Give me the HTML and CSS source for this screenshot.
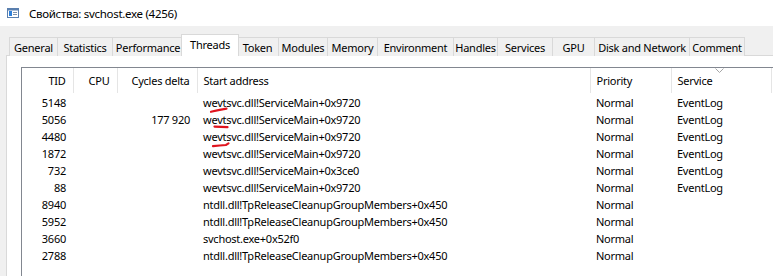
FILE: index.html
```html
<!DOCTYPE html>
<html lang="ru">
<head>
    <meta charset="UTF-8">
    <title>Свойства: svchost.exe (4256)</title>
    <link rel="stylesheet" href="styles.css">
</head>
<body>
    <div class="titlebar">
        <svg class="app-icon" width="12" height="10" viewBox="0 0 12 10">
            <rect x="0.5" y="0.5" width="11" height="9" fill="#fff" stroke="#5a7fae"/>
            <rect x="1" y="1" width="11" height="1.5" fill="#5a7fae"/>
            <rect x="2" y="3" width="3" height="5" fill="#2e7fd8"/>
            <rect x="6" y="4" width="4" height="1" fill="#7a8ea8"/>
            <rect x="6" y="6" width="4" height="1" fill="#7a8ea8"/>
        </svg>
        <span class="title">Свойства: svchost.exe (4256)</span>
    </div>

    <div class="window">
        <div class="tabs">
            <div class="tab t-general">General</div>
            <div class="tab t-stats">Statistics</div>
            <div class="tab t-perf">Performance</div>
            <div class="tab active t-threads">Threads</div>
            <div class="tab t-token">Token</div>
            <div class="tab t-modules">Modules</div>
            <div class="tab t-memory">Memory</div>
            <div class="tab t-env">Environment</div>
            <div class="tab t-handles">Handles</div>
            <div class="tab t-services">Services</div>
            <div class="tab t-gpu">GPU</div>
            <div class="tab t-disk">Disk and Network</div>
            <div class="tab t-comment">Comment</div>
        </div>

        <div class="panel">
            <div class="listview">
                <table class="threads">
                    <colgroup>
                        <col class="c-tid">
                        <col class="c-cpu">
                        <col class="c-cycles">
                        <col class="c-start">
                        <col class="c-prio">
                        <col class="c-service">
                    </colgroup>
                    <thead>
                        <tr>
                            <th class="num">TID</th>
                            <th class="num">CPU</th>
                            <th class="num">Cycles delta</th>
                            <th>Start address</th>
                            <th>Priority</th>
                            <th class="sorted">Service
                                <svg class="sort-arrow" width="9" height="5" viewBox="0 0 9 5">
                                    <path d="M0.5 0.5 L4.5 4.5 L8.5 0.5" fill="none" stroke="#a6a6a6"/>
                                </svg>
                            </th>
                        </tr>
                    </thead>
                    <tbody>
                        <tr><td class="num">5148</td><td></td><td></td><td>wevtsvc.dll!ServiceMain+0x9720</td><td>Normal</td><td>EventLog</td></tr>
                        <tr><td class="num">5056</td><td></td><td class="num">177 920</td><td>wevtsvc.dll!ServiceMain+0x9720</td><td>Normal</td><td>EventLog</td></tr>
                        <tr><td class="num">4480</td><td></td><td></td><td>wevtsvc.dll!ServiceMain+0x9720</td><td>Normal</td><td>EventLog</td></tr>
                        <tr><td class="num">1872</td><td></td><td></td><td>wevtsvc.dll!ServiceMain+0x9720</td><td>Normal</td><td>EventLog</td></tr>
                        <tr><td class="num">732</td><td></td><td></td><td>wevtsvc.dll!ServiceMain+0x3ce0</td><td>Normal</td><td>EventLog</td></tr>
                        <tr><td class="num">88</td><td></td><td></td><td>wevtsvc.dll!ServiceMain+0x9720</td><td>Normal</td><td>EventLog</td></tr>
                        <tr><td class="num">8940</td><td></td><td></td><td>ntdll.dll!TpReleaseCleanupGroupMembers+0x450</td><td>Normal</td><td></td></tr>
                        <tr><td class="num">5952</td><td></td><td></td><td>ntdll.dll!TpReleaseCleanupGroupMembers+0x450</td><td>Normal</td><td></td></tr>
                        <tr><td class="num">3660</td><td></td><td></td><td>svchost.exe+0x52f0</td><td>Normal</td><td></td></tr>
                        <tr><td class="num">2788</td><td></td><td></td><td>ntdll.dll!TpReleaseCleanupGroupMembers+0x450</td><td>Normal</td><td></td></tr>
                    </tbody>
                </table>
            </div>
        </div>
    </div>

    <!-- red pen marks drawn over the screenshot -->
    <svg class="marks" width="773" height="276" viewBox="0 0 773 276">
        <path d="M211 111.8 Q218 110 226.5 108.6" />
        <path d="M214.5 126.6 Q221 126.8 227.5 127.2" />
        <path d="M213 146.2 Q220 145.6 226 145 L228.5 143.4" />
    </svg>
</body>
</html>
```

FILE: styles.css
```css
body {
    margin: 0;
    width: 773px;
    height: 276px;
    overflow: hidden;
    position: relative;
    background-color: #f0f0f0;
    font-family: "Noto Sans", "Open Sans", sans-serif;
    font-size: 11px;
    letter-spacing: -0.25px;
    color: #000;
}

.titlebar {
    height: 26px;
    background-color: #fff;
    display: flex;
    align-items: center;
    padding-left: 7px;
}
.app-icon {
    margin-right: 10px;
    margin-top: -1px;
}
.title {
    font-size: 11.5px;
    letter-spacing: -0.3px;
    color: #000;
}

.window {
    padding: 8px 0 0 6px;
}

.tabs {
    display: flex;
    align-items: flex-end;
    height: 22px;
    padding-left: 3px;
    position: relative;
    z-index: 1;
}
.tab {
    height: 19px;
    box-sizing: border-box;
    border: 1px solid #d9d9d9;
    border-bottom: none;
    border-right: none;
    background-color: #f0f0f0;
    display: flex;
    align-items: center;
    justify-content: center;
    white-space: nowrap;
    line-height: 1;
}
.tab.active {
    height: 22px;
    margin: 0 -2px;
    border-right: 1px solid #d9d9d9;
    background-color: #fff;
    padding-bottom: 3px;
    position: relative;
    z-index: 2;
}
.tab.active + .tab {
    border-left: none;
}
.tab.t-comment {
    border-right: 1px solid #d9d9d9;
}

.t-general { width: 48px; }
.t-stats { width: 55px; }
.t-perf { width: 71px; }
.t-threads { width: 58px; }
.t-token { width: 41px; }
.t-modules { width: 49px; }
.t-memory { width: 50px; }
.t-env { width: 76px; }
.t-handles { width: 44px; }
.t-services { width: 55px; }
.t-gpu { width: 42px; }
.t-disk { width: 95px; }
.t-comment { width: 56px; }

.panel {
    background-color: #fff;
    border: 1px solid #d9d9d9;
    border-bottom: none;
    margin-top: -1px;
    height: 221px;
    width: 800px;
    padding: 11px 0 0 14px;
    box-sizing: border-box;
}

.listview {
    border-top: 1px solid #828790;
    border-left: 1px solid #828790;
    height: 210px;
    width: 780px;
    overflow: hidden;
}

.threads {
    border-collapse: collapse;
    table-layout: fixed;
    width: 749px;
}
.c-tid { width: 51px; }
.c-cpu { width: 44px; }
.c-cycles { width: 80px; }
.c-start { width: 393px; }
.c-prio { width: 81px; }
.c-service { width: 100px; }

.threads th {
    height: 25px;
    padding: 0 6px;
    font-weight: normal;
    text-align: left;
    border-right: 1px solid #e5e5e5;
    white-space: nowrap;
    position: relative;
}
.threads th.num {
    text-align: right;
    padding-right: 7px;
}
.threads td {
    height: 17px;
    padding: 0 6px;
    white-space: nowrap;
    overflow: hidden;
    line-height: 17px;
}
.threads td.num {
    text-align: right;
    padding-right: 7px;
}
.threads tbody tr:first-child td {
    padding-top: 1px;
}

.sort-arrow {
    position: absolute;
    left: 43px;
    top: 0;
}

.marks {
    position: absolute;
    left: 0;
    top: 0;
    pointer-events: none;
}
.marks path {
    fill: none;
    stroke: #e0141e;
    stroke-width: 2.2;
    stroke-linecap: round;
}
```
